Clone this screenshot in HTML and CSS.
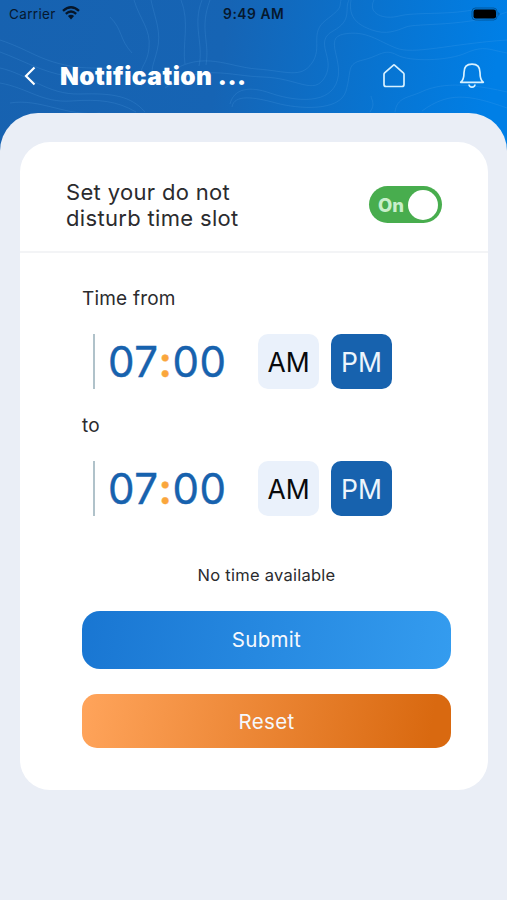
FILE: index.html
```html
<!DOCTYPE html>
<html lang="en">
<head>
<meta charset="utf-8">
<meta name="viewport" content="width=device-width, initial-scale=1">
<title>Notification</title>
<link rel="stylesheet" href="styles.css">
</head>
<body>
<div class="screen">
  <svg class="contours" viewBox="0 0 507 150" aria-hidden="true">
    <path d="M0 40C30 50 38 60 70 66S120 60 142 86M0 52C22 60 42 72 67 76M0 68C28 74 47 95 80 94S131 96 145 112M0 83C28 88 42 103 71 101S117 101 136 112M10 103C40 98 67 117 100 113M134 0C140 20 151 29 149 48S137 67 143 80M151 0C155 19 162 32 157 51S149 70 158 84M181 0C190 22 182 45 185 64M202 0C192 25 204 44 199 66M210 0C199 30 210 40 206 65M110 17C123 30 119 39 132 53"/>
    <path d="M170 72C204 50 228 67 257 69S301 79 312 63S309 33 326 20S339 8 341 0M165 88C202 63 228 76 263 77S314 96 325 77S313 42 333 31S344 10 349 0M230 104C234 88 250 86 270 93S326 106 336 84S322 38 344 34S378 41 396 48S449 44 507 40M232 107C234 94 254 97 276 103S340 112 346 91S346 64 363 60S384 48 397 55S448 61 466 53S490 50 507 53M351 0C348 18 358 25 372 30S396 31 406 27S468 27 507 12M374 0C367 14 384 20 399 16S447 15 472 10M370 112C376 104 371 99 371 96M395 112C397 97 408 98 421 92S456 80 507 92M422 111C448 92 468 94 507 108"/>
  </svg>
  <div class="status">
    <span class="carrier">Carrier</span>
    <svg class="wifi" viewBox="0 0 18 14"><path d="M1 4.800Q9-2.300 17 4.800M3.800 7.800Q9 3.300 14.200 7.800" fill="none" stroke="currentColor" stroke-width="2.3"/><path d="M5.900 10Q9 7.600 12.100 10L9 13.500Z" fill="currentColor"/></svg>
    <span class="clock">9:49 AM</span>
    <svg class="battery" viewBox="0 0 30 14"><rect x="1" y="1" width="25" height="12" rx="3.5" fill="none" stroke="#000" stroke-opacity=".3"/><rect x="2.500" y="2.500" width="22.500" height="9" rx="2.200"/><path d="M27.300 5Q30 7 27.300 9Z" opacity=".35"/></svg>
  </div>
  <header class="bar">
    <svg class="back" viewBox="0 0 12 20"><path d="M10.500 1.500 2 10l8.500 8.500"/></svg>
    <h1>Notification ...</h1>
    <svg class="home" viewBox="0 0 24 26"><path d="M2 11.200Q2 10.400 2.600 9.800L11.200 2.300Q12 1.600 12.800 2.300L21.300 9.800Q22 10.400 22 11.200V21.500Q22 23.500 20 23.500H4Q2 23.500 2 21.500Z"/></svg>
    <svg class="bell" viewBox="0 0 26 28"><path d="M1.700 20.300C4.500 18.500 5 15.500 5 10.500C5 5 8.200 2.200 13 2.200S21 5 21 10.500C21 15.500 21.500 18.500 24.300 20.300ZM10 22.500Q10.300 25.200 13 25.200T16 22.500"/></svg>
  </header>
  <main class="sheet">
    <section class="card">
      <div class="setting">
        <p class="label">Set your do not<br>disturb time slot</p>
        <div class="toggle"><span>On</span><i></i></div>
      </div>
      <div class="form">
        <p class="caption">Time from</p>
        <div class="slot">
          <div class="time"><span>07</span><b>:</b><span>00</span></div>
          <div class="period">AM</div>
          <div class="period active">PM</div>
        </div>
        <p class="caption to">to</p>
        <div class="slot">
          <div class="time"><span>07</span><b>:</b><span>00</span></div>
          <div class="period">AM</div>
          <div class="period active">PM</div>
        </div>
        <p class="empty">No time available</p>
        <div class="button submit">Submit</div>
        <div class="button reset">Reset</div>
      </div>
    </section>
  </main>
</div>
</body>
</html>
```
FILE: styles.css
```css
* { box-sizing: border-box; }
body { margin: 0; font-family: Inter, "Liberation Sans", sans-serif; color: #2b2b2e; }
p, h1 { margin: 0; font-weight: 400; }
svg { display: block; flex: none; }
.screen {
  position: relative;
  height: 900px;
  overflow: hidden;
  background: linear-gradient(100deg, #1762b0 0%, #1664b4 43%, #0874d1 73%, #007fe6 95%) 0 0 / 100% 160px no-repeat, #eaeef6;
}
.contours { position: absolute; left: 0; top: 0; width: 507px; height: 150px; fill: none; stroke: #64adeb; stroke-opacity: .22; stroke-width: .8; }
.status, .bar, .sheet { position: relative; }
.status { height: 28px; display: flex; align-items: center; padding: 0 6px 0 9px; color: #06182e; white-space: nowrap; }
.carrier { width: 53px; font-size: 13.5px; letter-spacing: .35px; }
.wifi { width: 18px; height: 14px; color: #061629; margin-top: -2px; }
.clock { margin-left: 143px; font-size: 13.8px; font-weight: 600; letter-spacing: .55px; }
.battery { width: 30px; height: 14px; margin: -1px 0 0 auto; }
.bar { height: 85px; display: flex; align-items: center; padding: 10px 22px 0 24px; color: #fff; }
.back { width: 12px; height: 20px; fill: none; stroke: #fff; stroke-width: 2.2; }
.bar h1 { margin-left: 24px; font-size: 24.5px; line-height: 30px; font-weight: 900; letter-spacing: .45px; white-space: nowrap; }
.home, .bell { fill: none; stroke: #d8f1ff; stroke-width: 1.7; stroke-linejoin: round; }
.home { width: 24px; height: 26px; margin-left: auto; }
.bell { width: 26px; height: 28px; margin-left: 53px; }
.sheet { height: 787px; padding: 29px 19px 0 20px; border-radius: 38px 38px 0 0; background: #eaeef6; }
.card { height: 648px; border-radius: 30px; background: #fff; }
.setting { height: 111px; display: flex; justify-content: space-between; align-items: center; padding: 16px 46px 0 46px; border-bottom: 2px solid #f3f4f6; }
.label { font-size: 22px; line-height: 26px; letter-spacing: .33px; }
.toggle { width: 73px; height: 37px; border-radius: 19px; padding: 0 4px 0 9px; display: flex; align-items: center; justify-content: space-between; background: #48ad4e; color: #c9efca; font-size: 18.5px; font-weight: 800; }
.toggle i { width: 30px; height: 30px; border-radius: 50%; background: #fff; }
.form { padding: 32px 37px 0 62px; }
.caption { height: 28px; font-size: 19px; line-height: 28px; letter-spacing: .2px; }
.slot { height: 55px; margin: 21px 0 0 11px; display: flex; gap: 12px; }
.caption.to { margin-top: 23px; }
.time { width: 153px; border-left: 2px solid #b0c2ca; padding-left: 13px; display: flex; align-items: center; font-size: 42px; font-weight: 400; letter-spacing: .5px; color: #1762ae; -webkit-text-stroke: .4px currentColor; }
.time b { width: 14px; text-align: center; font-weight: 600; color: #faa63c; }
.period { width: 61px; border-radius: 10px; background: #eaf1fb; color: #08090b; font-size: 26.5px; line-height: 56px; text-align: center; }
.period.active { background: #1762ae; color: #edf5fc; }
.empty { margin-top: 46px; height: 26px; font-size: 16.5px; line-height: 26px; letter-spacing: .25px; text-align: center; }
.button { text-align: center; color: #f5f8fd; font-size: 20.5px; letter-spacing: .3px; }
.submit { margin-top: 23px; height: 58px; line-height: 58px; border-radius: 18px; background: linear-gradient(100deg, #1976d2, #349cef); }
.reset { margin-top: 25px; height: 54px; line-height: 55px; border-radius: 15px; background: linear-gradient(100deg, #ffa45b, #d96910 94%); }
```
